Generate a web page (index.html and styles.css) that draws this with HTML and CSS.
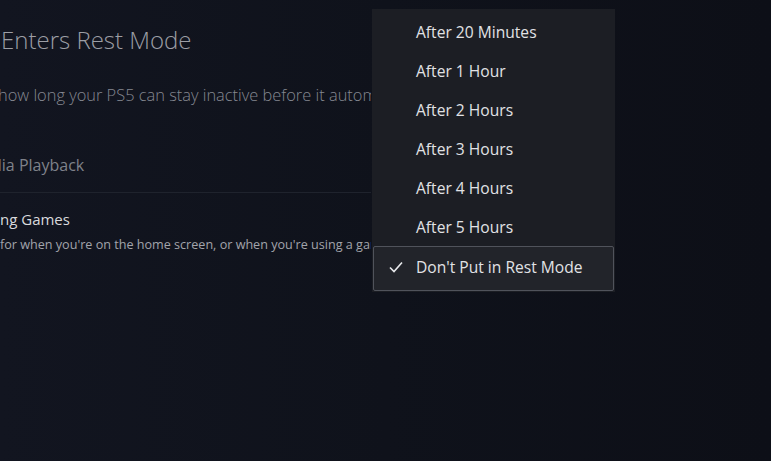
FILE: index.html
```html
<!DOCTYPE html>
<html lang="en">

<head>
    <meta charset="UTF-8">
    <meta name="viewport" content="width=device-width, initial-scale=1.0">
    <title>Rest Mode</title>
    <link rel="stylesheet" href="styles.css">
</head>

<body>
    <div class="screen">
        <div class="settings">
            <h1 class="title">Enters Rest Mode</h1>
            <p class="intro">how long your PS5 can stay inactive before it automatically enters rest mode.</p>

            <div class="row dim">
                <div class="row-label cut">dia Playback</div>
            </div>

            <div class="row">
                <div class="row-label">ng Games</div>
                <div class="row-desc">for when you're on the home screen, or when you're using a game or app.</div>
            </div>
        </div>

        <ul class="menu">
            <li>After 20 Minutes</li>
            <li>After 1 Hour</li>
            <li>After 2 Hours</li>
            <li>After 3 Hours</li>
            <li>After 4 Hours</li>
            <li>After 5 Hours</li>
            <li class="selected">
                <svg class="check" width="14" height="12" viewBox="0 0 14 12">
                    <path d="M1 6.5 L5 10.5 L13 1.5" fill="none" stroke="#e8e9ec" stroke-width="1.6" />
                </svg>
                Don't Put in Rest Mode
            </li>
        </ul>
    </div>
</body>

</html>
```

FILE: styles.css
```css
* {
    padding: 0;
    margin: 0;
    box-sizing: border-box;
}

body {
    font-family: "Open Sans", "Noto Sans", sans-serif;
    background: #0f1119;
    color: #e6e7ea;
}

/* Whole screen */
.screen {
    position: relative;
    width: 771px;
    height: 461px;
    overflow: hidden;
    background: linear-gradient(90deg, #121520 0%, #0f121b 50%, #0d0f17 100%);
}

/* Settings column, cut off on the left */
.settings {
    width: 371px;
    overflow: hidden;
    white-space: nowrap;
}

.title {
    font-size: 24px;
    font-weight: 300;
    color: #9c9ea5;
    padding-top: 24px;
    margin-left: 1px;
    line-height: 32px;
}

.intro {
    font-size: 16.4px;
    font-weight: 300;
    color: #858891;
    margin-top: 29px;
    margin-left: -2px;
    line-height: 20px;
}

.row {
    border-bottom: 1px solid #1f232d;
}

.row.dim {
    padding: 49px 0 16px;
}

.row.dim .row-label {
    color: #7f828a;
}

.row-label {
    font-size: 15px;
    color: #d9dadd;
    line-height: 22px;
}

.row.dim .row-label {
    font-size: 16px;
}

.cut {
    margin-left: -8px;
}

.row:last-child {
    border-bottom: none;
    padding-top: 15px;
}

.row-desc {
    font-size: 12.6px;
    color: #a2a4ab;
    margin-top: 6px;
    line-height: 18px;
}

/* Dropdown menu */
.menu {
    position: absolute;
    left: 372px;
    top: 9px;
    width: 243px;
    height: 283px;
    background: #1c1e24;
    list-style: none;
    padding-top: 4px;
}

.menu li {
    height: 39px;
    line-height: 39px;
    padding-left: 44px;
    font-size: 15.6px;
    color: #e1e2e5;
    position: relative;
}

.menu li.selected {
    margin: -1px 1px 0 1px;
    height: 45px;
    line-height: 40px;
    padding-left: 42px;
    border: 1.5px solid #50535b;
    border-radius: 2px;
    background: #22242a;
}

.check {
    position: absolute;
    left: 15px;
    top: 14px;
}
```
